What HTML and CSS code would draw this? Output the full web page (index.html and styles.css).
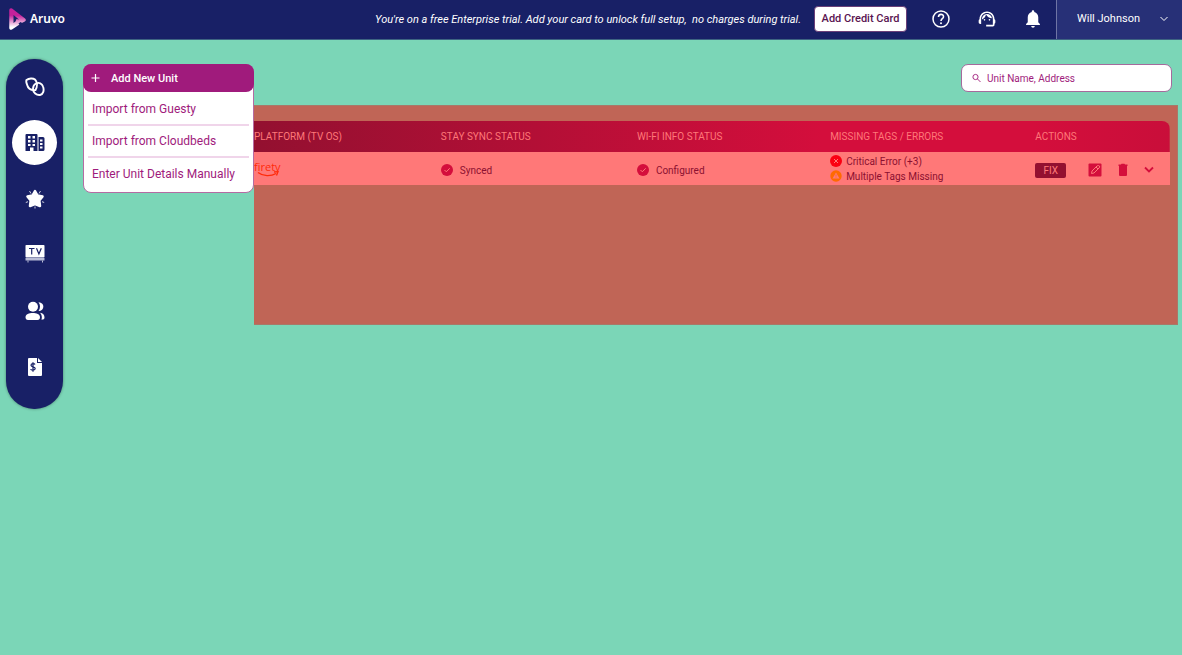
FILE: index.html
```html
<!DOCTYPE html>
<html lang="en">
<head>
  <meta charset="UTF-8" />
  <meta name="viewport" content="width=device-width, initial-scale=1.0"/>
  <title>Aruvo - Units</title>
  <link rel="stylesheet" href="styles.css">
</head>
<body>
  <header class="topbar">
    <a class="brand" href="#">
      <svg width="18" height="24" viewBox="0 0 18 24" aria-hidden="true">
        <defs>
          <linearGradient id="logoFill" x1="0" y1="0" x2="0" y2="1">
            <stop offset="0.3" stop-color="#c4219b"/>
            <stop offset="0.95" stop-color="#ffffff"/>
          </linearGradient>
        </defs>
        <path d="M3 3 L16 13 L12 15 L3 21 Z" fill="url(#logoFill)" stroke="url(#logoFill)" stroke-width="3.500" stroke-linejoin="round"/>
        <path d="M5.500 8 L11 12.500 L8.500 12 L7.500 14.500 L5.500 16 Z" fill="#182066"/>
        <path d="M10.500 16.500 L13 20 L16 17 L12.500 15 Z" fill="#182066"/>
      </svg>
      <span>Aruvo</span>
    </a>
    <p class="trial">You're on a free Enterprise trial. Add your card to unlock full setup, &nbsp;no charges during trial.</p>
    <button class="card-btn" type="button">Add Credit Card</button>
    <div class="tools">
      <button class="icon-btn" type="button" aria-label="Help">
        <svg width="20" height="20" viewBox="0 0 20 20" fill="none" stroke="#fff">
          <circle cx="10" cy="10" r="8" stroke-width="1.500"/>
          <path d="M7.500 8 C7.500 4.500 12.500 4.500 12.500 7.700 C12.500 9.700 10 9.700 10 12" stroke-width="1.600"/>
          <circle cx="10" cy="14.200" r="1" fill="#fff" stroke="none"/>
        </svg>
      </button>
      <button class="icon-btn" type="button" aria-label="Support">
        <svg width="20" height="20" viewBox="0 0 24 24" fill="#fff">
          <path d="M21 12.220C21 6.730 16.740 3 12 3c-4.690 0-9 3.650-9 9.280-.6.340-1 .980-1 1.720v2c0 1.100.9 2 2 2h1v-6.100c0-3.870 3.130-7 7-7s7 3.130 7 7V19h-8v2h8c1.100 0 2-.9 2-2v-1.220c.590-.310 1-.920 1-1.640v-2.300c0-.7-.410-1.310-1-1.620z"/>
          <circle cx="9" cy="13" r="1"/><circle cx="15" cy="13" r="1"/>
          <path d="M18 11.030C17.520 8.180 15.040 6 12.050 6c-3.030 0-6.290 2.510-6.030 6.450 2.470-1.010 4.330-3.210 4.860-5.890 1.310 2.630 4 4.440 7.120 4.470z"/>
        </svg>
      </button>
      <button class="icon-btn" type="button" aria-label="Notifications">
        <svg width="20" height="20" viewBox="0 0 24 24" fill="#fff">
          <path d="M12 22.500c1.200 0 2.100-.8 2.100-2H9.900C9.900 21.700 10.800 22.500 12 22.500zm6.300-6.500v-6c0-3.300-1.800-5.800-4.800-6.500V3a1.500 1.500 0 0 0-3 0v.5C7.500 4.200 5.700 6.700 5.700 10v6l-2 2v1.300h16.600V18z"/>
        </svg>
      </button>
    </div>
    <button class="user" type="button">
      <span>Will Johnson</span>
      <svg width="8" height="6" viewBox="0 0 8 6" fill="none" stroke="#fff"><path d="M.5 1 L4 4.500 L7.500 1"/></svg>
    </button>
  </header>

  <div class="layout">
    <nav class="sidebar">
      <a href="#" aria-label="Links">
        <svg width="20" height="20" viewBox="0 0 20 20" fill="none" stroke="#fff" stroke-width="1.900">
          <path d="M1.500 3 C4 1.200 8 1 10 2.500 C12.500 5 12.500 9.500 10.500 13 C6 13.500 3 11.500 2 7.500 C1.500 6 .8 4.500 1.500 3 Z"/>
          <path d="M11 6.500 C14 5 17 6.500 18 9.500 C19.500 13.500 18 17.500 15 18 C11.500 18.500 8 15.500 8 12 C8 9.500 9 7.500 11 6.500 Z"/>
        </svg>
      </a>
      <a class="active" href="#" aria-label="Units">
        <svg width="20" height="20" viewBox="0 0 20 20" fill="#182066">
          <path fill-rule="evenodd" d="M1.500 1 H11.500 Q12.500 1 12.500 2 V18 H8.500 V14.500 H5 V18 H.500 V2 Q.500 1 1.500 1 Z M3 3 V5.500 H5.500 V3 Z M7.500 3 V5.500 H10 V3 Z M3 7 V9.500 H5.500 V7 Z M7.500 7 V9.500 H10 V7 Z M3 11 V13 H5.500 V11 Z M7.500 11 V13 H10 V11 Z"/>
          <path fill-rule="evenodd" d="M13.500 4 H18 Q19.500 4 19.500 5.500 V16.500 Q19.500 18 18 18 H13.500 Z M15 6.500 V8.500 H17.500 V6.500 Z M15 10 V12 H17.500 V10 Z M15 13.500 V15.500 H17.500 V13.500 Z"/>
        </svg>
      </a>
      <a href="#" aria-label="Favourites">
        <svg width="20" height="20" viewBox="0 0 20 20" fill="#fff" stroke="#fff" stroke-linejoin="round">
          <path d="M10 2 L12.500 6.500 L17.500 7.500 L14.300 11.500 L15 17 L10 15 L5 17 L5.700 11.500 L2.500 7.500 L7.500 6.500 Z" stroke-width="2.500"/>
          <path d="M4.500 2 L6 4.500 M15.500 2 L14 4.500 M.8 13.500 L3 12.700 M19.200 13.500 L17 12.700 M10 17.500 V19.500" stroke-width=".8"/>
        </svg>
      </a>
      <a href="#" aria-label="TV">
        <svg width="20" height="20" viewBox="0 0 20 20">
          <rect x=".5" y="0" width="19" height="12.500" rx=".8" fill="#fff"/>
          <path d="M4 3.500 H9.500 M6.700 3.500 V9.500 M11.500 3.200 L13.900 9 L16.300 3.200" fill="none" stroke="#182066" stroke-width="1.200"/>
          <path d="M.5 13 H19.500 V15.500 H.5 Z" fill="#b9bcd6"/>
          <path d="M3 15.500 V17.500 M17.500 15.500 V17.500" stroke="#b9bcd6"/>
        </svg>
      </a>
      <a href="#" aria-label="Guests">
        <svg width="20" height="20" viewBox="0 0 20 20" fill="#fff">
          <circle cx="8" cy="5.700" r="5"/>
          <path d="M.5 16 C.5 10.500 15 10.500 15 16 Q15 19 12.500 19 H3 Q.500 19 .500 16 Z"/>
          <path d="M13.500 1.200 C20 1 20 10 13.500 10 C15.500 7.500 15.500 3.500 13.500 1.200 Z"/>
          <path d="M15 11.700 C18 12 19.500 14 19.500 16.500 Q19.500 18.700 16.500 18.700 C17.300 16 16.800 13.500 15 11.700 Z"/>
        </svg>
      </a>
      <a href="#" aria-label="Billing">
        <svg width="20" height="20" viewBox="0 0 20 20">
          <path d="M4 1 H12 V6 H17 V18 Q17 19 16 19 H4 Q3 19 3 18 V2 Q3 1 4 1 Z M13 1 L17 5 H13 Z" fill="#fff"/>
          <path d="M10 7.500 C9.500 6.300 6 6.300 6 8.300 C6 10.500 10.200 9.300 10.200 11.600 C10.200 13.700 6 13.700 5.700 12 M8 5.300 V14.700" fill="none" stroke="#182066" stroke-width="1.200"/>
        </svg>
      </a>
    </nav>

    <main class="content">
      <div class="toolbar">
        <div class="add-unit">
          <button class="add-btn" type="button">
            <svg width="9" height="10" viewBox="0 0 9 10" stroke="#fff" stroke-width="1.200"><path d="M4.500 1 V9 M.5 5 H8.500"/></svg>
            <span>Add New Unit</span>
          </button>
          <div class="menu">
            <button type="button">Import from Guesty</button>
            <button type="button">Import from Cloudbeds</button>
            <button type="button">Enter Unit Details Manually</button>
          </div>
        </div>
        <label class="search">
          <svg width="10" height="10" viewBox="0 0 10 10" fill="none" stroke="#a01b7c" stroke-width=".9"><circle cx="3.500" cy="4" r="2.600"/><path d="M5.500 6 L8.500 9"/></svg>
          <input type="text" placeholder="Unit Name, Address" aria-label="Search units">
        </label>
      </div>

      <section class="panel">
        <table class="units">
          <colgroup>
            <col class="col-platform"><col class="col-sync"><col class="col-wifi"><col class="col-errors"><col class="col-actions">
          </colgroup>
          <thead>
            <tr>
              <th>PLATFORM (TV OS)</th>
              <th>STAY SYNC STATUS</th>
              <th>WI-FI INFO STATUS</th>
              <th>MISSING TAGS / ERRORS</th>
              <th>ACTIONS</th>
            </tr>
          </thead>
          <tbody>
            <tr>
              <td>
                <div class="firetv">
                  <span>firetv</span>
                  <svg width="22" height="6" viewBox="0 0 22 6" fill="none" stroke="#ff2a0a"><path d="M1 1.500 C6 5.500 14 5.500 19 2.500 M17 1 L21 .700 L19.500 4.500" stroke-width="1.300"/></svg>
                </div>
              </td>
              <td>
                <div class="status">
                  <svg width="12" height="12" viewBox="0 0 12 12"><circle cx="6" cy="6" r="6" fill="#d40e3c"/><path d="M3.500 6 L5.300 7.800 L8.700 4.300" fill="none" stroke="#ff7878"/></svg>
                  <span>Synced</span>
                </div>
              </td>
              <td>
                <div class="status">
                  <svg width="12" height="12" viewBox="0 0 12 12"><circle cx="6" cy="6" r="6" fill="#d40e3c"/><path d="M3.500 6 L5.300 7.800 L8.700 4.300" fill="none" stroke="#ff7878"/></svg>
                  <span>Configured</span>
                </div>
              </td>
              <td>
                <div class="error">
                  <svg width="12" height="12" viewBox="0 0 12 12"><circle cx="6" cy="6" r="6" fill="#fb0012"/><path d="M4 4 L8 8 M8 4 L4 8" stroke="#ff7878"/></svg>
                  <span>Critical Error (+3)</span>
                </div>
                <div class="error">
                  <svg width="12" height="12" viewBox="0 0 12 12"><circle cx="6" cy="6" r="5.700" fill="#ff6a00"/><path d="M6 2.500 L9.500 8.500 H2.500 Z" fill="#ff7878"/><path d="M6 4.500 V6.700 M6 7.300 V8" stroke="#ff6a00" stroke-width=".7"/></svg>
                  <span>Multiple Tags Missing</span>
                </div>
              </td>
              <td>
                <div class="actions">
                  <button class="fix" type="button">FIX</button>
                  <button class="icon-btn" type="button" aria-label="Edit">
                    <svg width="14" height="14" viewBox="0 0 14 14"><rect x=".5" y=".5" width="13" height="13" rx="1" fill="#d40e3c"/><path d="M3.500 10.500 L4 8 L9 3 Q10.500 2 11.500 3 Q12 4 11 5 L6 10 Z M8 4 L10 6" fill="none" stroke="#ff7878"/></svg>
                  </button>
                  <button class="icon-btn" type="button" aria-label="Delete">
                    <svg width="10" height="14" viewBox="0 0 10 14" fill="#d40e3c"><path d="M.5 1.500 H3 L3.500 .700 H6.500 L7 1.500 H9.500 V3 H.500 Z M1 3 H9 V12 Q9 13 8 13 H2 Q1 13 1 12 Z"/></svg>
                  </button>
                  <button class="icon-btn" type="button" aria-label="Expand">
                    <svg width="10" height="8" viewBox="0 0 10 8" fill="none" stroke="#d40e3c" stroke-width="1.800"><path d="M1 1.500 L5 5.500 L9 1.500"/></svg>
                  </button>
                </div>
              </td>
            </tr>
          </tbody>
        </table>
      </section>
    </main>
  </div>
</body>
</html>
```
FILE: styles.css
```css
* { box-sizing: border-box; margin: 0; padding: 0; }
body {
  min-height: 100vh;
  font-family: Roboto, sans-serif;
  font-size: 11px;
  background: #7bd6b7;
}
button { font: inherit; color: inherit; background: none; border: none; cursor: pointer; }
a { color: inherit; text-decoration: none; }
svg { display: block; flex: none; }

.topbar {
  display: flex; align-items: center;
  height: 40px;
  padding-left: 8px;
  background: #182066;
  border-bottom: 1px solid #3d6482;
  color: #fff;
}
.brand {
  display: flex; align-items: center; gap: 4px;
  margin-right: auto;
  padding-bottom: 2px;
  font-family: "Noto Sans", sans-serif;
  font-size: 12px; font-weight: 600;
}
.trial { margin-right: 13px; font-style: italic; white-space: nowrap; }
.card-btn {
  width: 93px; height: 26px;
  margin-bottom: 2px;
  background: #fff;
  border: 1px solid #6a3f78;
  border-radius: 4px;
  color: #5a1450;
  font-weight: 500;
  white-space: nowrap;
}
.tools { display: flex; align-items: center; gap: 26px; margin: 0 13px 2px 24px; }
.user {
  display: flex; align-items: center; justify-content: space-between;
  width: 126px; align-self: stretch;
  padding: 0 14px 2px 20px;
  background: #273077;
  border-left: 1px solid #6f75a5;
}

.layout { display: flex; align-items: flex-start; }
.sidebar {
  display: flex; flex-direction: column; align-items: center; gap: 11px;
  width: 57px;
  margin: 19px 0 0 6px;
  padding: 5px 0 20px;
  background: #182066;
  border-radius: 28px;
  box-shadow: 0 0 3px rgba(0, 0, 0, 0.4);
}
.sidebar a { display: flex; align-items: center; justify-content: center; width: 45px; height: 45px; }
.sidebar .active { background: #fff; border-radius: 50%; }

.content { flex: 1; padding: 24px 4px 0 20px; }
.toolbar { display: flex; justify-content: space-between; padding-right: 6px; }
.add-unit { position: relative; width: 171px; }
.add-btn {
  position: relative; z-index: 2;
  display: flex; align-items: center; gap: 11px;
  width: 100%; height: 28px;
  padding: 0 8px;
  background: #a01b7c;
  border-radius: 8px;
  color: #fff;
  font-weight: 500;
}
.menu {
  position: absolute; top: 0; left: 0; z-index: 1;
  width: 100%;
  padding: 29px 4px 2px;
  background: #fff;
  border: 1px solid #b56ba3;
  border-radius: 8px;
}
.menu button {
  display: block;
  width: 100%; height: 32px;
  padding-left: 4px;
  border-bottom: 2px solid #f0d5ea;
  color: #a01b7c;
  font-size: 12px;
  text-align: left;
  white-space: nowrap;
}
.menu button:last-child { border-bottom: none; }
.search {
  display: flex; align-items: center; gap: 5px;
  width: 211px; height: 28px;
  padding: 0 10px;
  background: #fff;
  border: 1px solid #a56a9c;
  border-radius: 7px;
}
.search input { flex: 1; min-width: 0; border: none; outline: none; font: inherit; font-size: 10px; color: #a01b7c; }
.search input::placeholder { color: #a01b7c; opacity: 1; }

.panel {
  min-height: 220px;
  margin: 13px 0 0 171px;
  padding: 15px 7px 0 0;
  background: #c06556;
  border: 1px solid #a87868;
  border-left: none;
}
.units { width: 100%; table-layout: fixed; border-collapse: separate; border-spacing: 0; font-size: 10px; }
.col-platform { width: 20.4%; }
.col-sync { width: 21.4%; }
.col-wifi { width: 21.1%; }
.col-errors { width: 22.4%; }
.col-actions { width: 14.7%; }
.units thead { background: linear-gradient(90deg, #931030, #d40e3c 62%, #d40e3c 85%, #c90e3a); }
.units thead tr { height: 31px; }
.units th { color: #ff7878; font-weight: 400; text-align: left; }
.units th:last-child, .units thead { border-top-right-radius: 8px; }
.units tbody tr { height: 33px; background: #ff7878; }
.units td { color: #8c1030; white-space: nowrap; }
.firetv { color: #ff2a0a; font-family: "Open Sans", sans-serif; font-size: 11px; line-height: 11px; }
.firetv svg { margin: -1px 0 0 3px; }
.status, .actions { display: flex; align-items: center; padding-top: 3px; }
.status { gap: 7px; }
.error { display: flex; align-items: center; gap: 4px; line-height: 15px; }
.fix {
  width: 31px; height: 15px;
  margin-right: 22px;
  background: #931030;
  border-radius: 2px;
  color: #ff7878;
}
.actions .icon-btn + .icon-btn { margin-left: 16px; }
```
